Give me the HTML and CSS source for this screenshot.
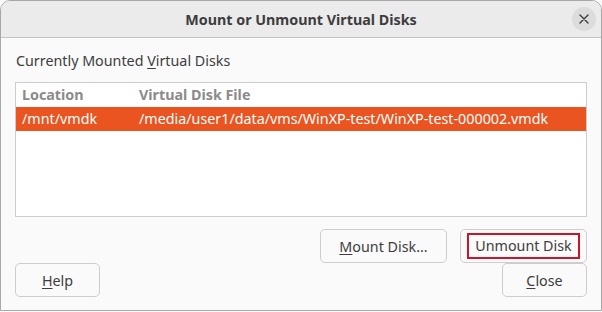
FILE: index.html
```html
<!DOCTYPE html>
<html lang="en">
<head>
    <meta charset="UTF-8">
    <title>Mount or Unmount Virtual Disks</title>
    <link rel="stylesheet" href="styles.css">
</head>
<body>
    <div class="window">
        <div class="titlebar">
            <span class="title">Mount or Unmount Virtual Disks</span>
            <button class="close-x" aria-label="Close">
                <svg width="10" height="10" viewBox="0 0 10 10">
                    <path d="M1 1 L9 9 M9 1 L1 9" stroke="#3d3d3d" stroke-width="1.4" stroke-linecap="round"/>
                </svg>
            </button>
        </div>

        <div class="content">
            <div class="label">Currently Mounted <u>V</u>irtual Disks</div>

            <div class="list">
                <div class="row head">
                    <span class="col-loc">Location</span>
                    <span class="col-file">Virtual Disk File</span>
                </div>
                <div class="row selected">
                    <span class="col-loc">/mnt/vmdk</span>
                    <span class="col-file">/media/user1/data/vms/WinXP-test/WinXP-test-000002.vmdk</span>
                </div>
            </div>

            <div class="actions">
                <button class="btn wide"><u>M</u>ount Disk...</button>
                <button class="btn wide focused"><span class="focus-ring">Unmount Disk</span></button>
            </div>
            <div class="footer">
                <button class="btn"><u>H</u>elp</button>
                <button class="btn"><u>C</u>lose</button>
            </div>
        </div>
    </div>
</body>
</html>
```

FILE: styles.css
```css
html, body {
    margin: 0;
    padding: 0;
    background: #fafafa;
}
body {
    font-family: "Noto Sans", sans-serif;
    font-size: 14.3px;
    color: #3d3d3d;
}
.window {
    width: 600px;
    height: 309px;
    border: 1px solid #a8a8a8;
    border-radius: 10px 10px 0 0;
    background: #fafafa;
    overflow: hidden;
}
.titlebar {
    height: 36px;
    background: #ebebeb;
    border-bottom: 1px solid #c4c4c4;
    display: flex;
    align-items: center;
    justify-content: center;
    position: relative;
}
.title {
    font-weight: bold;
    color: #3d3d3d;
}
.close-x {
    position: absolute;
    right: 5px;
    top: 6px;
    width: 24px;
    height: 24px;
    border: none;
    border-radius: 50%;
    background: #dcdcdc;
    display: flex;
    align-items: center;
    justify-content: center;
    padding: 0;
}
.content {
    padding: 13px 14px 0 14px;
}
.label {
    height: 20px;
    line-height: 20px;
    padding-left: 1px;
}
.label u, .btn u {
    text-decoration-thickness: 1px;
    text-underline-offset: 2px;
}
.list {
    margin-top: 11px;
    height: 133px;
    background: #ffffff;
    border: 1px solid #cdcdcd;
}
.row {
    display: flex;
    height: 24px;
    line-height: 24px;
    padding-left: 6px;
    white-space: nowrap;
}
.row.head {
    font-weight: bold;
    color: #8b8b8b;
}
.row.selected {
    background: #e95420;
    color: #ffffff;
}
.col-loc {
    width: 117px;
}
.actions {
    display: flex;
    justify-content: flex-end;
    gap: 13px;
    margin-top: 12px;
}
.footer {
    display: flex;
    justify-content: space-between;
}
.btn {
    font-family: inherit;
    font-size: inherit;
    color: #3d3d3d;
    background: #fafafa;
    border: 1px solid #cdcdcd;
    border-radius: 5px;
    width: 85px;
    height: 34px;
    padding: 0;
    display: flex;
    align-items: center;
    justify-content: center;
}
.btn.wide {
    width: 127px;
}
.focus-ring {
    display: block;
    width: 109px;
    height: 22px;
    line-height: 22px;
    border: 2px solid #c7162b;
}
```
